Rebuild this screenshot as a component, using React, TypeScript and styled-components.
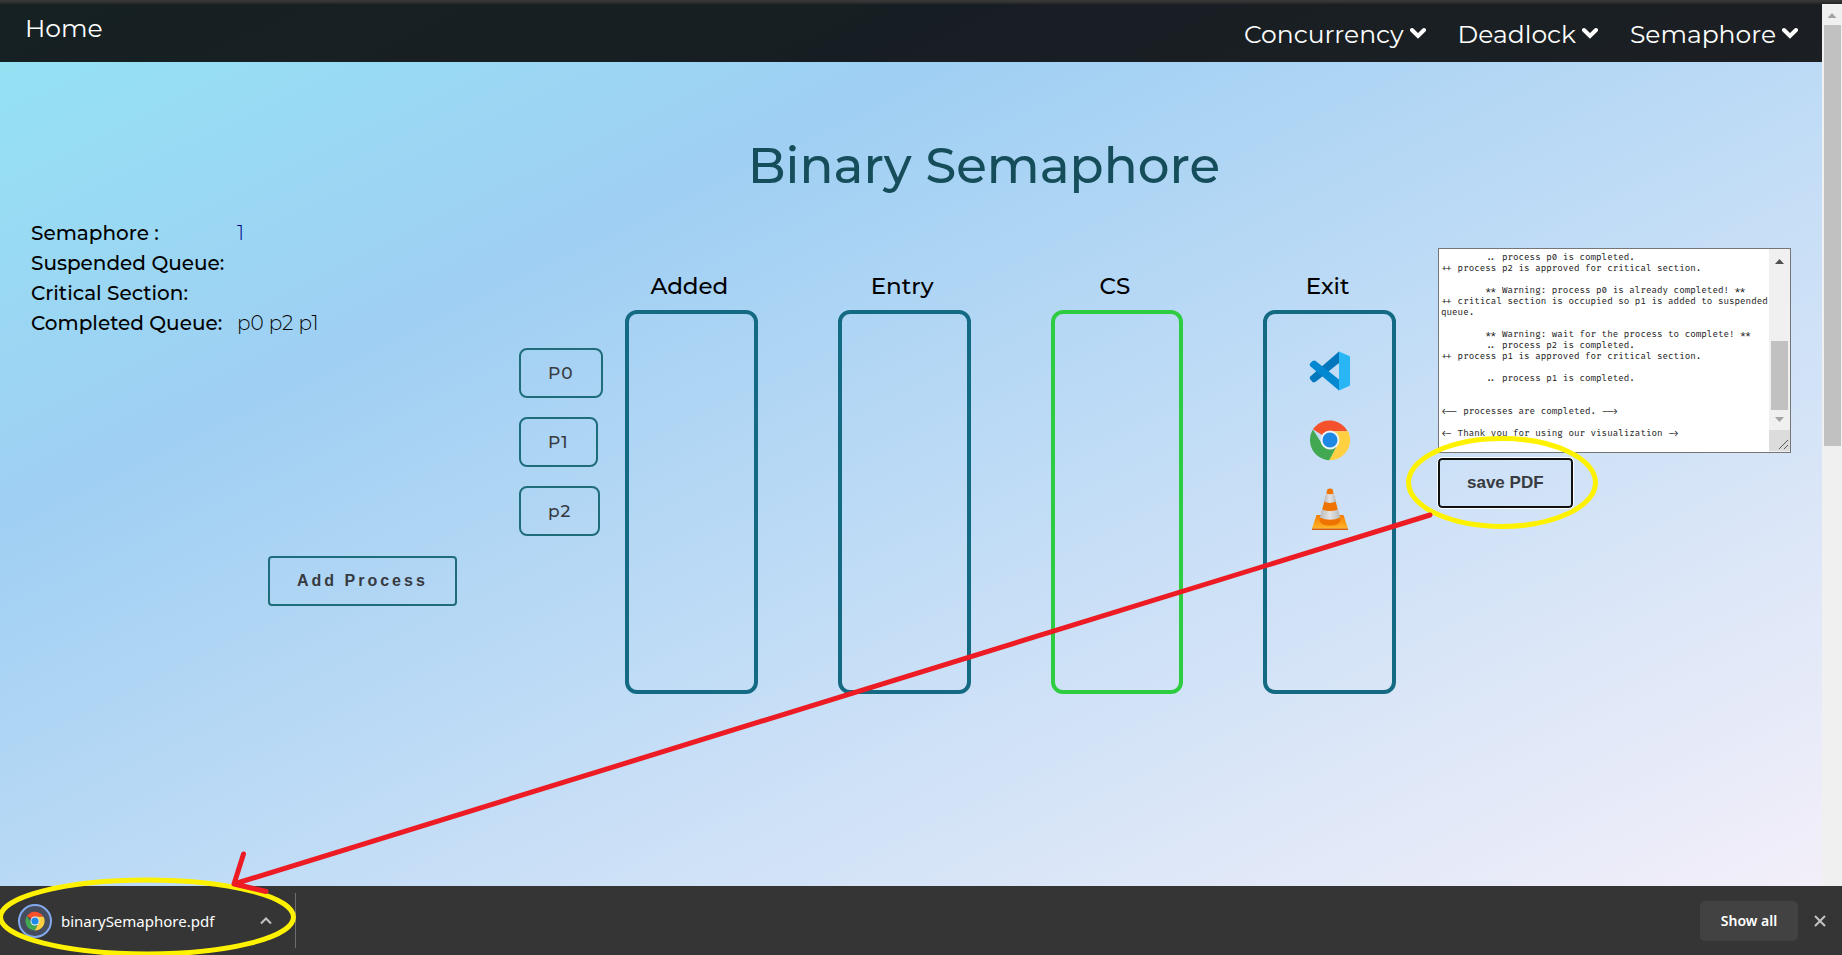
import React from 'react';
import styled, { createGlobalStyle } from 'styled-components';

const GlobalStyle = createGlobalStyle`
  * { box-sizing: border-box; }
  body {
    margin: 0;
    font-family: Montserrat, Inter, 'Open Sans', sans-serif;
    color: #000;
  }
`;

const Screen = styled.div`
  position: relative;
  display: flex;
  flex-direction: column;
  min-height: 100vh;
  overflow: hidden;
`;

const TopEdge = styled.div`
  height: 4px;
  background: #373737;
  border-bottom: 2px solid #2a2a2a;
`;

const Viewport = styled.div`
  display: flex;
  flex: 1;
`;

const Page = styled.div`
  flex: 1;
  min-width: 0;
  background: linear-gradient(to bottom right, #93e4f3 0%, #9fcff3 29%, #d0e2f7 69%, #f3eff9 100%);
`;

const Header = styled.header`
  display: flex;
  justify-content: space-between;
  height: 58px;
  padding: 0 24px 0 25px;
  background: rgba(3, 3, 3, 0.87);
`;

const HomeLink = styled.a`
  font-size: 25px;
  line-height: 49px;
  color: #fff;
  text-decoration: none;
`;

const Nav = styled.nav`
  display: flex;
  gap: 32px;
`;

const NavButton = styled.button`
  display: flex;
  align-items: center;
  gap: 6px;
  height: 60px;
  padding: 0;
  border: 0;
  background: none;
  font: inherit;
  font-size: 25px;
  color: #fff;
`;

const NavChevron = styled.svg`
  width: 16px;
  height: 18px;
`;

const Title = styled.h1`
  margin: 66px 0 0 8%;
  font-size: 50px;
  line-height: 76px;
  font-weight: 500;
  text-align: center;
  color: #154e5a;
`;

const Workspace = styled.main`
  display: grid;
  grid-template-columns: 488fr 106fr 813fr 353px;
  padding: 14px 31px 0;
`;

const StatusPanel = styled.section`
  display: flex;
  flex-direction: column;
  align-items: flex-start;
`;

const StatusList = styled.dl`
  display: grid;
  grid-template-columns: 206px auto;
  margin: 0;
  font-size: 20px;
  line-height: 30px;
`;

const StatusName = styled.dt`
  font-weight: 500;
  white-space: nowrap;
`;

const StatusValue = styled.dd<{ $accent?: boolean }>`
  margin: 0;
  font-weight: 300;
  color: ${(p) => (p.$accent ? '#00008b' : '#000')};
`;

const OutlineButton = styled.button`
  height: 50px;
  padding: 0 27px;
  border: 2px solid #1f6c7b;
  border-radius: 4px;
  background: transparent;
  color: #373a40;
  font-family: 'Liberation Sans', Arial, sans-serif;
  font-size: 17px;
  font-weight: 700;
`;

const AddButton = styled(OutlineButton)`
  margin: 218px 0 0 237px;
  font-size: 16px;
  letter-spacing: 3px;
`;

const SaveButton = styled(OutlineButton)`
  margin-top: 5px;
  border-color: #101010;
  outline: 1px solid #fff;
`;

const ProcessList = styled.section`
  display: flex;
  flex-direction: column;
  align-items: flex-start;
  gap: 19px;
  padding-top: 130px;
`;

const ProcessButton = styled(OutlineButton)`
  border-radius: 8px;
  font-family: inherit;
  font-weight: 500;
  letter-spacing: 1px;
`;

const Stages = styled.section`
  display: grid;
  grid-template-columns: repeat(4, 1fr);
  gap: 80px;
  padding: 52px 42px 0 0;
`;

const StageTitle = styled.h2`
  margin: 0 0 8px;
  padding-right: 4px;
  font-size: 23px;
  line-height: 32px;
  font-weight: 500;
  text-align: center;
`;

const StageBox = styled.div<{ $active?: boolean }>`
  display: flex;
  flex-direction: column;
  align-items: center;
  gap: 27px;
  height: 384px;
  padding-top: 36px;
  border: 4px solid ${(p) => (p.$active ? '#2ecc40' : '#136a82')};
  border-radius: 12px;

  svg {
    width: 42px;
    height: 42px;
  }
`;

const LogPanel = styled.section`
  display: flex;
  flex-direction: column;
  align-items: flex-start;
  padding-top: 30px;
`;

const LogFrame = styled.div`
  display: flex;
  width: 100%;
  height: 205px;
  border: 1px solid #767676;
  background: #fff;
`;

const LogText = styled.textarea`
  flex: 1;
  min-width: 0;
  padding: 3px 0 3px 2px;
  border: 0;
  outline: 0;
  resize: none;
  overflow: hidden;
  background: transparent;
  font-family: 'Fira Code', 'DejaVu Sans Mono', monospace;
  font-size: 9px;
  line-height: 11px;
  color: #222;
`;

const LogScrollbar = styled.div`
  display: flex;
  flex-direction: column;
  align-items: center;
  width: 21px;
  padding-top: 10px;
  background: #f0f0f0;
`;

const LogThumb = styled.div`
  width: 17px;
  height: 69px;
  margin: 77px 0 7px;
  background: #c1c1c1;
`;

const ResizeCorner = styled.svg`
  width: 21px;
  height: 21px;
  margin-top: 8px;
  background: #dcdcdc;
`;

const Triangle = styled.span<{ $down?: boolean; $color: string }>`
  width: 9px;
  height: 5px;
  flex: none;
  background: ${(p) => p.$color};
  clip-path: ${(p) => (p.$down ? 'polygon(0 0, 100% 0, 50% 100%)' : 'polygon(50% 0, 100% 100%, 0 100%)')};
`;

const PageScrollbar = styled.div`
  display: flex;
  flex-direction: column;
  align-items: center;
  width: 20px;
  padding-top: 9px;
  background: #f0f0f0;
`;

const PageThumb = styled.div`
  width: 17px;
  height: 421px;
  margin-top: 7px;
  background: #c1c1c1;
`;

const DownloadBar = styled.footer`
  display: flex;
  align-items: center;
  height: 69px;
  padding: 0 15px 0 18px;
  background: #353535;
  font-family: 'Segoe UI', 'Noto Sans', sans-serif;
  color: #fff;
`;

const DownloadItem = styled.div`
  display: flex;
  align-items: center;
  width: 278px;
  height: 55px;
  padding-right: 22px;
  border-right: 1px solid #6e6e6e;
  font-size: 15px;
`;

const FileBadge = styled.span`
  display: grid;
  place-items: center;
  width: 34px;
  height: 34px;
  margin-right: 9px;
  border: 2px solid #83a9ee;
  border-radius: 50%;
  background: #454d5e;
`;

const FileLink = styled.a`
  flex: 1;
  color: inherit;
  text-decoration: none;
`;

const IconButton = styled.button`
  display: grid;
  place-items: center;
  padding: 0;
  border: 0;
  background: none;
  color: #c4c4c4;
`;

const ShowAll = styled.button`
  width: 98px;
  height: 40px;
  margin: 0 15px 0 auto;
  border: 0;
  border-radius: 5px;
  background: #424242;
  color: #fff;
  font: inherit;
  font-size: 14px;
  font-weight: 600;
`;

const Annotations = styled.svg`
  position: absolute;
  inset: 0;
  width: 100%;
  height: 100%;
  pointer-events: none;
`;

const VsCodeIcon = () => (
  <svg viewBox="0 0 42 42" aria-label="VS Code">
    <path d="M30 1.500 5 23.200 1.300 26.500Q.4 27.500 1 29L3.500 32Q5.200 33 7 31.600L30 13Z" fill="#0277bd" />
    <path d="M30 40.500 1.300 16.200Q.2 15 1 13.500L3.500 11Q5.200 9.700 7 11.200L30 29.500Z" fill="#0288d1" />
    <path d="M30 1.500 40.300 6Q41 6.500 41 7.300V34.700Q41 35.500 40.300 36L30 40.500Z" fill="#29b6f6" />
  </svg>
);

const ChromeIcon = ({ size = 42 }: { size?: number }) => (
  <svg viewBox="0 0 48 48" width={size} height={size} aria-label="Chrome">
    <path d="M24 24 4.500 11.800A23 23 0 0 1 44 14H24Z" fill="#f4512c" />
    <path d="M24 14H44.700A23 23 0 0 1 23 47L32.700 29 24 24Z" fill="#ffd042" />
    <path d="M4.500 12A23 23 0 0 0 23 47L32.700 29 24 34 15.300 29Z" fill="#43a852" />
    <circle cx="24" cy="24" r="10.800" fill="#eef4fb" />
    <circle cx="24" cy="24" r="8.600" fill="#1e88e5" />
  </svg>
);

const ConeIcon = () => (
  <svg viewBox="0 0 42 42" aria-label="VLC">
    <defs>
      <linearGradient id="coneBase" x2="0" y2="1">
        <stop offset="0" stopColor="#f57c00" />
        <stop offset="1" stopColor="#ffb529" />
      </linearGradient>
      <linearGradient id="coneStripe">
        <stop offset="0" stopColor="#b9b9b9" />
        <stop offset=".5" stopColor="#e4e4e4" />
        <stop offset="1" stopColor="#b9b9b9" />
      </linearGradient>
    </defs>
    <path d="M7.500 27H34.500L39 40.500H3Z" fill="url(#coneBase)" />
    <path d="M3 40.500H39V42H3Z" fill="#d95f02" />
    <path d="M18.500 1Q21 0 23.500 1L31.500 32Q31 37.500 21 37.500T10.500 32Z" fill="#ef7300" />
    <path d="M17.300 5.500Q21 7 24.700 5.500L27 13.800Q21 16 15 13.800Z" fill="url(#coneStripe)" />
    <path d="M13 21.500Q21 24.500 29 21.500L31.200 29.500Q21 34 10.800 29.500Z" fill="url(#coneStripe)" />
  </svg>
);

const menus = ['Concurrency', 'Deadlock', 'Semaphore'];

const statuses = [
  { name: 'Semaphore :', value: '1', accent: true },
  { name: 'Suspended Queue:', value: '' },
  { name: 'Critical Section:', value: '' },
  { name: 'Completed Queue:', value: 'p0 p2 p1' },
];

const processes = ['P0', 'P1', 'p2'];

const stages = [
  { name: 'Added' },
  { name: 'Entry' },
  { name: 'CS', active: true },
  { name: 'Exit', filled: true },
];

const log = `        .. process p0 is completed.
++ process p2 is approved for critical section.

        ** Warning: process p0 is already completed! **
++ critical section is occupied so p1 is added to suspended queue.

        ** Warning: wait for the process to complete! **
        .. process p2 is completed.
++ process p1 is approved for critical section.

        .. process p1 is completed.


<-- processes are completed. -->

<- Thank you for using our visualization ->`;

export default function App() {
  return (
    <Screen>
      <GlobalStyle />
      <TopEdge />
      <Viewport>
        <Page>
          <Header>
            <HomeLink href="#home">Home</HomeLink>
            <Nav>
              {menus.map((name) => (
                <NavButton key={name}>
                  {name}
                  <NavChevron viewBox="0 0 16 18">
                    <path
                      d="M2 5 8 11 14 5"
                      fill="none"
                      stroke="currentColor"
                      strokeWidth="4"
                      strokeLinecap="round"
                    />
                  </NavChevron>
                </NavButton>
              ))}
            </Nav>
          </Header>
          <Title>Binary Semaphore</Title>
          <Workspace>
            <StatusPanel>
              <StatusList>
                {statuses.map((s) => (
                  <React.Fragment key={s.name}>
                    <StatusName>{s.name}</StatusName>
                    <StatusValue $accent={s.accent}>{s.value}</StatusValue>
                  </React.Fragment>
                ))}
              </StatusList>
              <AddButton>Add Process</AddButton>
            </StatusPanel>
            <ProcessList>
              {processes.map((name) => (
                <ProcessButton key={name}>{name}</ProcessButton>
              ))}
            </ProcessList>
            <Stages>
              {stages.map((stage) => (
                <div key={stage.name}>
                  <StageTitle>{stage.name}</StageTitle>
                  <StageBox $active={stage.active}>
                    {stage.filled && (
                      <>
                        <VsCodeIcon />
                        <ChromeIcon />
                        <ConeIcon />
                      </>
                    )}
                  </StageBox>
                </div>
              ))}
            </Stages>
            <LogPanel>
              <LogFrame>
                <LogText aria-label="Process log" defaultValue={log} readOnly spellCheck={false} />
                <LogScrollbar>
                  <Triangle $color="#505050" />
                  <LogThumb />
                  <Triangle $down $color="#a3a3a3" />
                  <ResizeCorner viewBox="0 0 21 21">
                    <path d="M10 19 19 10M15 19 19 15" stroke="#555" fill="none" />
                  </ResizeCorner>
                </LogScrollbar>
              </LogFrame>
              <SaveButton>save PDF</SaveButton>
            </LogPanel>
          </Workspace>
        </Page>
        <PageScrollbar>
          <Triangle $color="#a3a3a3" />
          <PageThumb />
        </PageScrollbar>
      </Viewport>
      <DownloadBar>
        <DownloadItem>
          <FileBadge>
            <ChromeIcon size={20} />
          </FileBadge>
          <FileLink href="#binarySemaphore.pdf">binarySemaphore.pdf</FileLink>
          <IconButton aria-label="File options">
            <svg width="14" height="9" viewBox="0 0 14 9">
              <path d="M2 7.500 7 2.500 12 7.500" stroke="currentColor" strokeWidth="2" fill="none" />
            </svg>
          </IconButton>
        </DownloadItem>
        <ShowAll>Show all</ShowAll>
        <IconButton aria-label="Close">
          <svg width="14" height="14" viewBox="0 0 14 14">
            <path d="M2 2 12 12M12 2 2 12" stroke="currentColor" strokeWidth="2" />
          </svg>
        </IconButton>
      </DownloadBar>
      <Annotations viewBox="0 0 1842 955" preserveAspectRatio="none">
        <g fill="none" stroke="#fff200" strokeWidth="5">
          <ellipse cx="1502" cy="482.500" rx="93.500" ry="44" />
          <ellipse cx="147" cy="917" rx="146.500" ry="37" />
        </g>
        <path
          d="M1430 515 234 884M243.500 854 234 884 266 891.500"
          fill="none"
          stroke="#ed1c24"
          strokeWidth="5"
          strokeLinecap="round"
          strokeLinejoin="round"
        />
      </Annotations>
    </Screen>
  );
}
